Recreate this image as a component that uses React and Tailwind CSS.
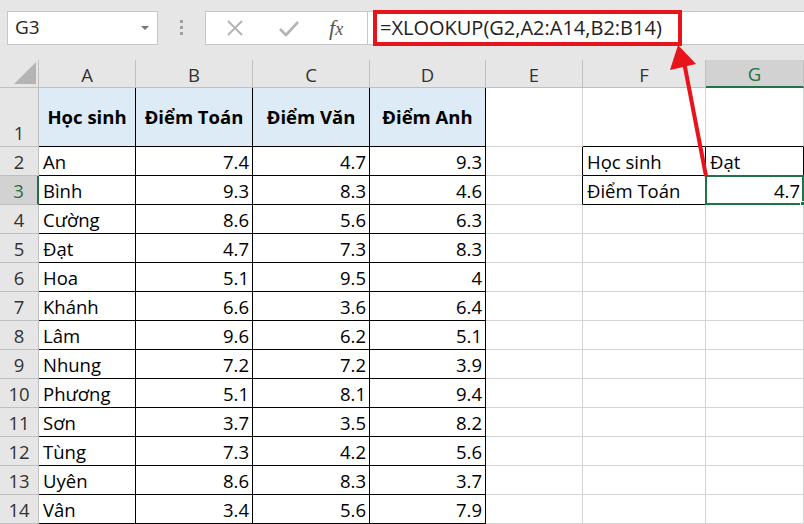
import React from "react"

const students = [
    ["An", "7.4", "4.7", "9.3"],
    ["Bình", "9.3", "8.3", "4.6"],
    ["Cường", "8.6", "5.6", "6.3"],
    ["Đạt", "4.7", "7.3", "8.3"],
    ["Hoa", "5.1", "9.5", "4"],
    ["Khánh", "6.6", "3.6", "6.4"],
    ["Lâm", "9.6", "6.2", "5.1"],
    ["Nhung", "7.2", "7.2", "3.9"],
    ["Phương", "5.1", "8.1", "9.4"],
    ["Sơn", "3.7", "3.5", "8.2"],
    ["Tùng", "7.3", "4.2", "5.6"],
    ["Uyên", "8.6", "8.3", "3.7"],
    ["Vân", "3.4", "5.6", "7.9"],
]

const letters = ["A", "B", "C", "D", "E", "F", "G"]

function cellValue(r, c) {
    if (r === 1 && c === 0) return "Học sinh"
    if (r === 1 && c === 1) return "Điểm Toán"
    if (r === 1 && c === 2) return "Điểm Văn"
    if (r === 1 && c === 3) return "Điểm Anh"
    if (r >= 2 && c <= 3) return students[r - 2][c]
    if (r === 2 && c === 5) return "Học sinh"
    if (r === 3 && c === 5) return "Điểm Toán"
    if (r === 2 && c === 6) return "Đạt"
    if (r === 3 && c === 6) return "4.7"
    return ""
}

function Cell({ r, c }) {
    const v = cellValue(r, c)
    const inTable = c <= 3
    const inSide = (c === 5 || c === 6) && (r === 2 || r === 3)
    const blackRight = inTable || inSide || (c === 4 && (r === 2 || r === 3))
    const blackBottom = inTable || ((c === 5 || c === 6) && r <= 3)
    const isNum = v !== "" && !isNaN(Number(v))
    const header = r === 1 && inTable

    const right = blackRight ? "border-r-black" : "border-r-[#d4d4d4]"
    const bottom = blackBottom ? "border-b-black" : "border-b-[#d4d4d4]"
    const bg = header ? "bg-[#ddebf7]" : "bg-white"
    const align = header
        ? "items-center justify-center font-bold"
        : isNum
            ? "items-end justify-end pr-[3px]"
            : "items-end justify-start pl-[4px]"

    return (
        <div className={`relative flex border-r border-b ${right} ${bottom} ${bg} ${align} pb-[1px] text-[18.5px] leading-[24px] text-black whitespace-nowrap`}>
            {v}
            {r === 3 && c === 6 && (
                <div className="absolute -left-[1px] -top-[1px] -right-[1px] -bottom-[1px] border-2 border-[#217346]">
                    <div className="absolute -right-[4px] -bottom-[4px] w-[6px] h-[6px] bg-[#217346] border border-white" />
                </div>
            )}
        </div>
    )
}

function Arrow() {
    return (
        <svg className="absolute left-0 top-0 pointer-events-none" width="804" height="524" viewBox="0 0 804 524">
            <line x1="706" y1="176" x2="684" y2="62" stroke="#e8141b" strokeWidth="4" />
            <polygon points="678,45 670,70 696,64" fill="#e8141b" />
        </svg>
    )
}

export default function App() {
    const rows = Array.from({ length: 14 }, (_, i) => i + 1)
    return (
        <div className="relative w-[804px] h-[524px] overflow-hidden bg-white font-['Open_Sans',sans-serif]">
            <div className="flex items-center h-[60px] bg-[#e6e6e6] pl-[7px] pb-[5px]">
                <div className="flex items-center justify-between w-[151px] h-[34px] bg-white border border-[#c6c6c6] pl-[7px] pr-[8px]">
                    <span className="text-[19px] text-[#222]">G3</span>
                    <span className="w-0 h-0 border-l-[4px] border-r-[4px] border-t-[4px] border-l-transparent border-r-transparent border-t-[#777]" />
                </div>
                <div className="flex flex-col gap-[3px] mx-[22px] items-center">
                    <span className="w-[3px] h-[3px] bg-[#a0a0a0]" />
                    <span className="w-[3px] h-[3px] bg-[#a0a0a0]" />
                    <span className="w-[3px] h-[3px] bg-[#a0a0a0]" />
                </div>
                <div className="flex items-center w-[163px] h-[34px] bg-white border border-[#c6c6c6]">
                    <svg width="20" height="20" viewBox="0 0 20 20" className="ml-[19px]">
                        <path d="M3 3 L17 17 M17 3 L3 17" stroke="#b4b4b4" strokeWidth="2" />
                    </svg>
                    <svg width="22" height="20" viewBox="0 0 22 20" className="ml-[33px]">
                        <path d="M2 11 L8 17 L20 4" stroke="#b4b4b4" strokeWidth="2.6" fill="none" />
                    </svg>
                    <span className="ml-[29px] text-[22px] italic text-[#555] font-['Liberation_Serif',serif] leading-none">
                        f<span className="text-[18px]">x</span>
                    </span>
                </div>
                <div className="flex-1 flex items-center h-[34px] bg-white border-y border-[#c6c6c6]">
                    <div className="ml-[5px] flex items-center h-[36px] w-[309px] border-[4px] border-[#e8141b] pl-[3px] text-[20px] text-[#222] whitespace-nowrap">
                        =XLOOKUP(G2,A2:A14,B2:B14)
                    </div>
                </div>
            </div>

            <div className="grid grid-cols-[39px_97px_117px_117px_116px_97px_123px_98px] grid-rows-[28px_59px_repeat(13,29px)]">
                <div className="relative bg-[#e6e6e6] border-r border-b border-[#bfbfbf]">
                    <svg className="absolute right-[2px] bottom-[3px]" width="22" height="22" viewBox="0 0 22 22">
                        <polygon points="22,0 22,22 0,22" fill="#b4b4b4" />
                    </svg>
                </div>
                {letters.map((l) => (
                    <div
                        key={l}
                        className={l === "G"
                            ? "flex items-end justify-center bg-[#d2d2d2] border-r border-[#bfbfbf] border-b-2 border-b-[#217346] text-[18.5px] leading-[24px] text-[#217346]"
                            : "flex items-end justify-center bg-[#e6e6e6] border-r border-b border-[#bfbfbf] text-[18.5px] leading-[24px] text-[#333]"}
                    >
                        {l}
                    </div>
                ))}
                {rows.map((r) => (
                    <React.Fragment key={r}>
                        <div
                            className={r === 3
                                ? "flex items-end justify-center bg-[#d2d2d2] border-r-2 border-r-[#217346] border-b border-b-[#bfbfbf] pb-[1px] text-[18.5px] leading-[24px] text-[#217346]"
                                : "flex items-end justify-center bg-[#e6e6e6] border-r border-b border-[#bfbfbf] pb-[1px] text-[18.5px] leading-[24px] text-[#333]"}
                        >
                            {r}
                        </div>
                        {letters.map((l, c) => (
                            <Cell key={l} r={r} c={c} />
                        ))}
                    </React.Fragment>
                ))}
            </div>
            <Arrow />
        </div>
    )
}
